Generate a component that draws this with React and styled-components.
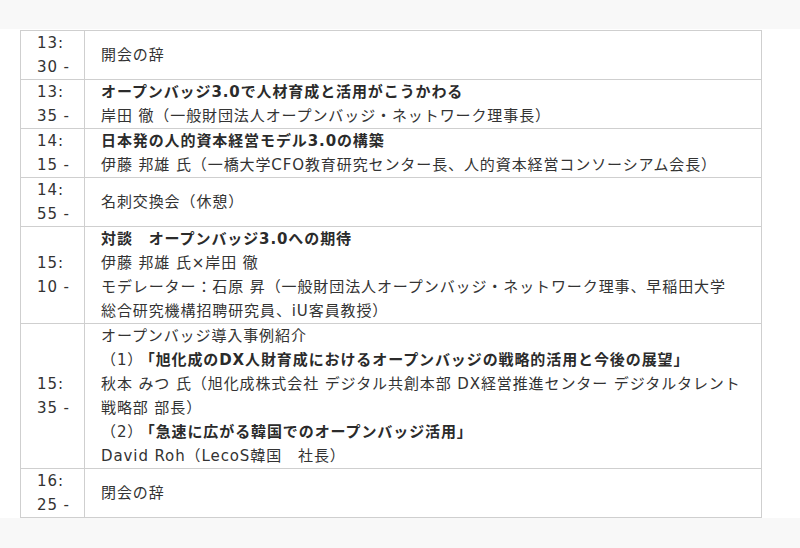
import React from "react";
import styled, { createGlobalStyle } from "styled-components";

const GlobalStyle = createGlobalStyle`
  body {
    margin: 0;
    background: #f8f8f8;
    font-family: "DejaVu Sans", "Noto Sans CJK JP", sans-serif;
    color: #333;
  }
`;

const Section = styled.section`
  margin-top: 29px;
  padding: 1px 38px 0 20px;
  background: #fff;
`;

const Table = styled.table`
  width: 742px;
  border-collapse: collapse;
  table-layout: fixed;
  font-size: 15px;
  line-height: 24px;
  letter-spacing: 0.9px;
`;

const TimeCell = styled.td`
  width: 31px;
  padding: 0 16px;
  border: 1px solid #cfcfcf;
  vertical-align: middle;
  white-space: nowrap;
`;

const BodyCell = styled.td`
  padding: 0 16px;
  border: 1px solid #cfcfcf;
  vertical-align: middle;
`;

const Line = styled.div`
  font-weight: ${(props) => (props.bold ? 700 : 400)};
  color: ${(props) => (props.bold ? "#2b2b2b" : "#333")};
`;

const Strong = styled.strong`
  font-weight: 700;
  color: #2b2b2b;
  margin-left: ${(props) => props.gap || "0"};
`;

const rows = [
  { start: "13:", end: "30 -", lines: [{ text: "開会の辞" }] },
  {
    start: "13:",
    end: "35 -",
    lines: [
      { text: "オープンバッジ3.0で人材育成と活用がこうかわる", bold: true },
      { text: "岸田 徹（一般財団法人オープンバッジ・ネットワーク理事長）" },
    ],
  },
  {
    start: "14:",
    end: "15 -",
    lines: [
      { text: "日本発の人的資本経営モデル3.0の構築", bold: true },
      { text: "伊藤 邦雄 氏（一橋大学CFO教育研究センター長、人的資本経営コンソーシアム会長）" },
    ],
  },
  { start: "14:", end: "55 -", lines: [{ text: "名刺交換会（休憩）" }] },
  {
    start: "15:",
    end: "10 -",
    lines: [
      { text: "対談　オープンバッジ3.0への期待", bold: true },
      { text: "伊藤 邦雄 氏×岸田 徹" },
      {
        text: [
          "モデレーター：石原 昇（一般財団法人オープンバッジ・ネットワーク理事、早稲田大学",
          "総合研究機構招聘研究員、iU客員教授）",
        ],
      },
    ],
  },
  {
    start: "15:",
    end: "35 -",
    lines: [
      { text: "オープンバッジ導入事例紹介" },
      { prefix: "（1）", text: "「旭化成のDX人財育成におけるオープンバッジの戦略的活用と今後の展望」" },
      { text: "秋本 みつ 氏（旭化成株式会社 デジタル共創本部 DX経営推進センター デジタルタレント戦略部 部長）" },
      { prefix: "（2）", text: "「急速に広がる韓国でのオープンバッジ活用」" },
      { text: "David Roh（LecoS韓国　社長）" },
    ],
  },
  { start: "16:", end: "25 -", lines: [{ text: "閉会の辞" }] },
];

const renderText = (text) =>
  Array.isArray(text)
    ? text.map((part, k) => (
        <React.Fragment key={k}>
          {k > 0 && <br />}
          {part}
        </React.Fragment>
      ))
    : text;

export default function App() {
  return (
    <>
      <GlobalStyle />
      <Section>
        <Table>
          <tbody>
            {rows.map((row, i) => (
              <tr key={i}>
                <TimeCell>
                  {row.start}
                  <br />
                  {row.end}
                </TimeCell>
                <BodyCell>
                  {row.lines.map((line, j) =>
                    line.prefix ? (
                      <Line key={j}>
                        {line.prefix}
                        <Strong gap="4px">{line.text}</Strong>
                      </Line>
                    ) : (
                      <Line key={j} bold={line.bold}>
                        {renderText(line.text)}
                      </Line>
                    )
                  )}
                </BodyCell>
              </tr>
            ))}
          </tbody>
        </Table>
      </Section>
    </>
  );
}
